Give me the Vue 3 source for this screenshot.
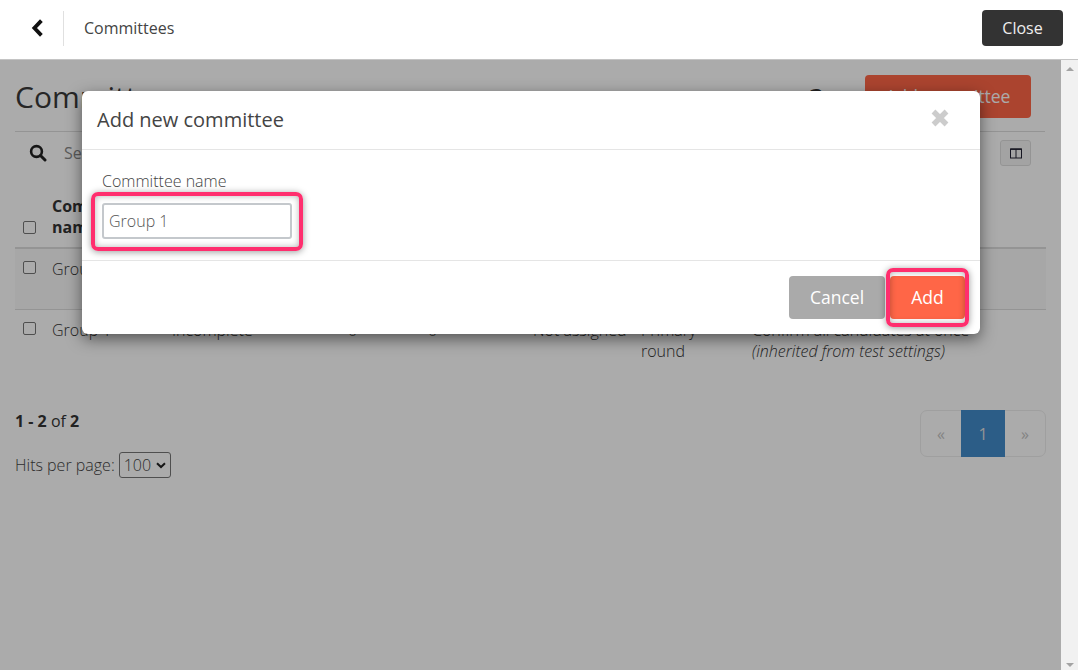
<script setup>
const columns = ['Status', 'Candidates', 'Evaluators', 'Assigned to', 'Round', 'Confirmation']

const rows = [
  { id: 2, name: 'Group 2', status: 'Incomplete', candidates: '0', evaluators: '0', assigned: 'Not assigned', round: 'Primary round', hover: true },
  { id: 1, name: 'Group 1', status: 'Incomplete', candidates: '0', evaluators: '0', assigned: 'Not assigned', round: 'Primary round', hover: false },
]
</script>

<template>
  <div class="app">
    <header class="topbar">
      <button class="back" aria-label="Back">
        <svg width="12" height="18" viewBox="0 0 12 18"><path d="M10.4 1.6 L3.4 9 L10.4 16.4" fill="none" stroke="#111" stroke-width="3.8" /></svg>
      </button>
      <span class="topbar-title">Committees</span>
      <button class="close-btn">Close</button>
    </header>

    <div class="workspace">
      <main class="page">
        <div class="page-head">
          <h1>Committees</h1>
          <span class="help">?</span>
          <button class="add-btn">Add committee</button>
        </div>

        <div class="search-row">
          <svg class="search-icon" width="18" height="18" viewBox="0 0 18 18"><circle cx="7.5" cy="7.5" r="5.4" fill="none" stroke="#222" stroke-width="2.6" /><path d="M11.5 11.5 L16 16" stroke="#222" stroke-width="3" stroke-linecap="round" /></svg>
          <span class="search-text">Search</span>
          <button class="col-btn" aria-label="Columns">
            <svg width="12" height="11" viewBox="0 0 12 11"><rect x="0.5" y="1" width="11" height="9" fill="none" stroke="#223" stroke-width="1" /><path d="M6 1 V10" stroke="#223" /><path d="M0.5 1.2 H11.5" stroke="#223" stroke-width="1.4" /></svg>
          </button>
        </div>

        <table class="grid">
          <thead>
            <tr>
              <th class="c-check"><span class="check"></span></th>
              <th class="c-name">Committee name</th>
              <th class="c-status">{{ columns[0] }}</th>
              <th class="c-num">{{ columns[1] }}</th>
              <th class="c-num2">{{ columns[2] }}</th>
              <th class="c-assigned">{{ columns[3] }}</th>
              <th class="c-round">{{ columns[4] }}</th>
              <th>{{ columns[5] }}</th>
            </tr>
          </thead>
          <tbody>
            <tr v-for="r in rows" :key="r.id" :class="{ hover: r.hover }">
              <td><span class="check"></span></td>
              <td>{{ r.name }}</td>
              <td>{{ r.status }}</td>
              <td>{{ r.candidates }}</td>
              <td>{{ r.evaluators }}</td>
              <td class="nowrap">{{ r.assigned }}</td>
              <td>{{ r.round }}</td>
              <td>Confirm all candidates at once<br /><em>(inherited from test settings)</em></td>
            </tr>
          </tbody>
        </table>

        <div class="pager-row">
          <div class="counts"><b>1 - 2</b> of <b>2</b></div>
          <nav class="pager">
            <span class="pg">«</span>
            <span class="pg current">1</span>
            <span class="pg">»</span>
          </nav>
        </div>

        <div class="hits">
          Hits per page:
          <span class="hits-select">100
            <svg width="10" height="7" viewBox="0 0 10 7"><path d="M1 1.2 L5 5 L9 1.2" fill="none" stroke="#222" stroke-width="2" /></svg>
          </span>
        </div>

        <div class="overlay">
          <section class="modal">
            <div class="modal-head">
              <h2>Add new committee</h2>
              <svg class="modal-x" width="18" height="18" viewBox="0 0 18 18"><path d="M2.5 2.5 L15.5 15.5 M15.5 2.5 L2.5 15.5" stroke="#ccc" stroke-width="5.4" /></svg>
            </div>
            <div class="modal-body">
              <label class="field-label">Committee name</label>
              <div class="field">
                <div class="field-input">Group 1</div>
                <span class="ring ring-input"></span>
              </div>
            </div>
            <div class="modal-foot">
              <button class="btn cancel">Cancel</button>
              <div class="add-wrap">
                <button class="btn confirm">Add</button>
                <span class="ring ring-add"></span>
              </div>
            </div>
          </section>
        </div>
      </main>

      <aside class="scrollbar">
        <span class="arrow up"></span>
        <span class="arrow down"></span>
      </aside>
    </div>
  </div>
</template>

<style>
html, body {
  margin: 0;
  overflow: hidden;
}
</style>

<style scoped>
.app {
  width: 1078px;
  height: 670px;
  display: flex;
  flex-direction: column;
  font-family: "Open Sans", "Liberation Sans", sans-serif;
  font-size: 16px;
  line-height: 21px;
  color: #333;
  background: #fff;
  overflow: hidden;
}

.topbar {
  height: 56px;
  flex: none;
  display: flex;
  align-items: center;
  padding: 0 15px 3px 31px;
  background: #fff;
  box-sizing: content-box;
  border-bottom: 1px solid #c4c4c4;
}
.back {
  width: 33px;
  height: 35px;
  padding: 0;
  margin-right: 20px;
  display: flex;
  align-items: center;
  background: none;
  border: 0;
  border-right: 1px solid #e0e0e0;
}
.topbar-title {
  flex: 1;
  color: #444;
}
.close-btn {
  width: 81px;
  height: 36px;
  padding: 0;
  border: 0;
  border-radius: 4px;
  background: #333;
  color: #eee;
  font: inherit;
}

.workspace {
  flex: 1;
  display: flex;
  min-height: 0;
}
.page {
  position: relative;
  flex: 1;
  padding: 15px 15px 0;
  background: #fff;
  overflow: hidden;
}

.page-head {
  height: 56px;
  display: flex;
  align-items: flex-start;
  border-bottom: 1px solid #ddd;
  margin-right: 1px;
}
.page-head h1 {
  flex: 1;
  margin: 0;
  padding-top: 1px;
  font-size: 30px;
  line-height: 41px;
  font-weight: 400;
  color: #3a3a3a;
}
.help {
  margin: 3px 42px 0 0;
  font-size: 30px;
  line-height: 41px;
  color: #333;
}
.add-btn {
  width: 166px;
  height: 43px;
  margin-right: 14px;
  padding: 0;
  border: 0;
  border-radius: 4px;
  background: #ff6647;
  color: #fff;
  font: inherit;
  font-size: 17.5px;
}

.search-row {
  height: 42px;
  display: flex;
  align-items: center;
  padding-left: 14px;
}
.search-icon {
  margin-right: 17px;
}
.search-text {
  flex: 1;
  color: #888;
}
.col-btn {
  width: 31px;
  height: 26px;
  margin: 0 15px 0 0;
  padding: 0;
  display: flex;
  align-items: center;
  justify-content: center;
  background: #f4f4f4;
  border: 1px solid #ddd;
  border-radius: 3px;
}

.grid {
  width: 1031px;
  table-layout: fixed;
  border-collapse: collapse;
  margin-top: 8px;
}
.grid th {
  height: 66px;
  padding: 0 12px 9px;
  box-sizing: border-box;
  vertical-align: bottom;
  text-align: left;
  font-weight: 700;
  border-bottom: 2px solid #ddd;
  color: #333;
}
.grid td {
  padding: 10px 12px 8px;
  vertical-align: top;
  border-bottom: 1px solid #ddd;
  height: 60px;
  box-sizing: border-box;
  font-weight: 300;
}
.grid td em {
  font-weight: 300;
}
.grid tr:last-child td {
  border-bottom: 0;
}
.grid tr.hover td {
  background: #fafafa;
}
.grid .c-check {
  width: 25px;
  padding: 0 0 11px 8px;
}
.grid td:first-child {
  padding-left: 8px;
  padding-right: 0;
}
.grid td.nowrap {
  white-space: nowrap;
}
.c-name { width: 120px; }
.c-status { width: 176px; }
.c-num { width: 80px; }
.c-num2 { width: 105px; }
.c-assigned { width: 108px; }
.c-round { width: 111px; }

.check {
  display: block;
  width: 13px;
  height: 13px;
  box-sizing: border-box;
  border: 1px solid #767676;
  border-radius: 2px;
  background: #fff;
}
th .check {
  margin-bottom: 2px;
}
td .check {
  margin-top: 2px;
}

.pager-row {
  display: flex;
  justify-content: space-between;
  align-items: flex-start;
  margin-top: 40px;
}
.counts {
  margin-top: 1px;
}
.pager {
  display: flex;
  height: 47px;
  box-sizing: border-box;
  border: 1px solid #eee;
  border-radius: 7px;
  color: #c4c4c4;
}
.pg {
  width: 40px;
  display: flex;
  align-items: center;
  justify-content: center;
  padding-top: 2px;
  box-sizing: border-box;
}
.pg.current {
  width: 44px;
  margin: -1px 0;
  background: #428bca;
  color: #ddd;
}
.hits {
  margin-top: -5px;
  display: flex;
  align-items: center;
  gap: 4px;
  font-weight: 300;
  color: #444;
}
.hits-select {
  width: 52px;
  height: 26px;
  box-sizing: border-box;
  display: flex;
  align-items: center;
  gap: 5px;
  padding-left: 4px;
  border: 1px solid #767676;
  border-radius: 3px;
}

.overlay {
  position: absolute;
  inset: 0;
  padding: 31px 0 0 82px;
  background: rgba(0, 0, 0, 0.33);
}
.modal {
  width: 898px;
  height: 243px;
  display: flex;
  flex-direction: column;
  background: #fff;
  border-radius: 6px;
  box-shadow: 0 5px 15px rgba(0, 0, 0, 0.5);
}
.modal-head {
  height: 59px;
  flex: none;
  display: flex;
  align-items: center;
  justify-content: space-between;
  padding: 0 31px 5px 15px;
  box-sizing: border-box;
  border-bottom: 1px solid #e5e5e5;
}
.modal-head h2 {
  margin: 4px 0 0;
  font-size: 20px;
  line-height: 27px;
  font-weight: 400;
  color: #444;
}
.modal-x {
  margin-top: 1px;
}
.modal-body {
  height: 110px;
  flex: none;
  padding: 21px 20px 0;
  box-sizing: border-box;
}
.field-label {
  display: block;
  margin-bottom: 11px;
  font-size: 16px;
  font-weight: 300;
  color: #444;
}
.field {
  position: relative;
  width: 190px;
}
.field-input {
  height: 36px;
  padding-left: 5px;
  box-sizing: border-box;
  border: 2px solid #c4c8cc;
  border-radius: 3px;
  line-height: 32px;
  font-weight: 300;
  color: #555;
}
.ring {
  position: absolute;
  border: 4px solid #ff2e6e;
  border-radius: 7px;
  box-shadow: 0 1px 7px rgba(0, 0, 0, 0.4), inset 0 0 6px rgba(0, 0, 0, 0.3);
  pointer-events: none;
}
.ring-input {
  inset: -11px -11px -12px -11px;
}
.ring-add {
  inset: -8px -4px -8px -4px;
}
.modal-foot {
  flex: 1;
  display: flex;
  justify-content: flex-end;
  align-items: flex-start;
  gap: 5px;
  padding: 15px 15px 0 0;
  border-top: 1px solid #e5e5e5;
}
.add-wrap {
  position: relative;
}
.btn {
  display: block;
  height: 43px;
  padding: 0;
  border: 0;
  border-radius: 4px;
  color: #fff;
  font: inherit;
  font-size: 17.5px;
}
.cancel {
  width: 96px;
  background: #aaa;
}
.confirm {
  width: 75px;
  background: #ff6647;
}

.scrollbar {
  width: 17px;
  flex: none;
  display: flex;
  flex-direction: column;
  justify-content: space-between;
  align-items: center;
  padding: 7px 0 3px;
  background: #f1f1f1;
}
.arrow {
  width: 0;
  height: 0;
  border-left: 4px solid transparent;
  border-right: 4px solid transparent;
}
.arrow.up {
  border-bottom: 4px solid #a3a3a3;
}
.arrow.down {
  border-top: 4px solid #a3a3a3;
}
</style>
